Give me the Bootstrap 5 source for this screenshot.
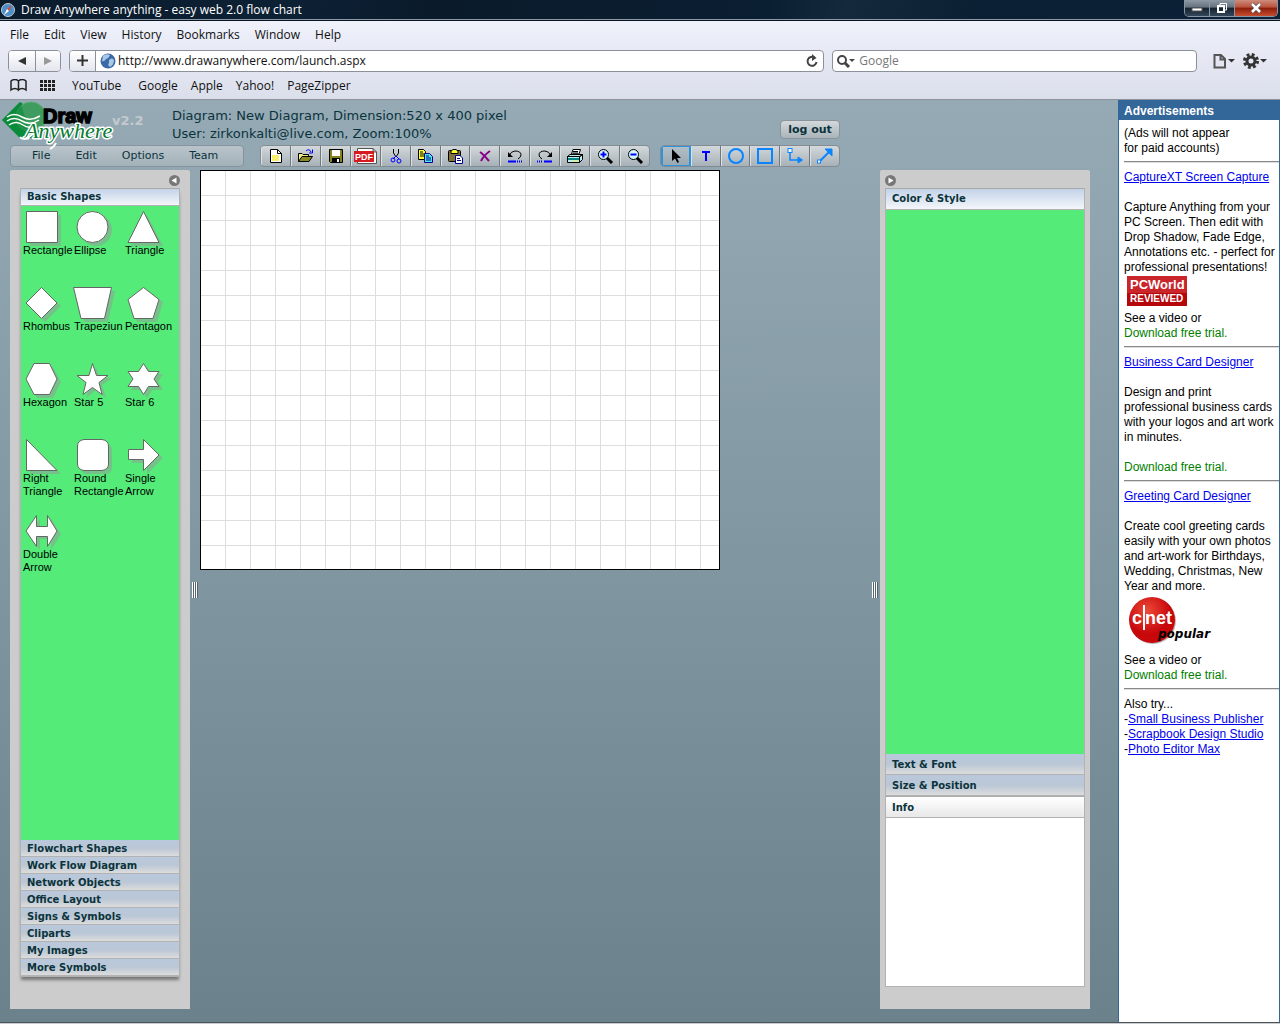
<!DOCTYPE html>
<html lang="en">
<head>
<meta charset="utf-8">
<meta name="viewport" content="width=device-width, initial-scale=1">
<title>Draw Anywhere anything - easy web 2.0 flow chart</title>
<link href="https://cdn.jsdelivr.net/npm/bootstrap@5.3.0/dist/css/bootstrap.min.css" rel="stylesheet">
<style>
body{font-family:"Open Sans","Noto Sans",sans-serif;font-size:12px;line-height:16px;color:#111}
button{font:inherit;color:inherit;border:0;background:none;padding:0}
svg{display:block;flex:none}
.titlebar{height:20px;background:linear-gradient(100deg,#0a1b2c 0,#0d2135 22%,#0a1a2b 34%,#0b1f32 60%,#14293b 66%,#0b2033 76%,#0c2138 100%);border-bottom:1px solid #8b98a6;color:#fff}
.titlebar h1{font-size:12px;line-height:20px;margin:0;font-weight:400}
.winbtns{height:17px;border:1px solid #8796a5;border-top:0;border-radius:0 0 5px 5px;overflow:hidden;margin-right:2px}
.winbtns button{width:25px;display:flex;justify-content:center;align-items:center;background:linear-gradient(#8e99a5,#66727f 45%,#15222f 50%,#34475a);border-right:1px solid #8796a5}
.winbtns .winclose{width:42px;border:0;background:linear-gradient(#cf8c7c,#b9513c 45%,#8c1d08 50%,#c64d30)}
.chrome{background:linear-gradient(#eff1fb,#dbdfeb);border-top:1px solid #0a1420;border-bottom:1px solid #8f939b}
.menurow{height:28px;gap:15px;padding-left:10px}
.addrrow{height:23px;gap:8px;padding-left:8px}
.markrow{height:27px;gap:13px;padding-left:10px}
.markrow a,.menurow button{color:#111;text-decoration:none}
.field{height:22px;border:1px solid #8c909b;border-radius:4px;background:#fff;overflow:hidden}
.urlfield{flex:27 1 0}
.searchfield{flex:13 1 0}
.field input{border:0;outline:0;background:none;flex:1;min-width:0;padding:0 4px;font:inherit;height:20px;color:#111}
.field .urlinput{padding-left:2px}
.field input::placeholder{color:#777}
.chromebtn{width:26px;height:20px;display:flex;align-items:center;justify-content:center;background:linear-gradient(#fff,#e4e6ee)}
.chromebtn+.chromebtn{border-left:1px solid #8c909b;width:25px}
.chromebtn.plus{border-right:1px solid #8c909b}
.workspace{background:linear-gradient(#95aab5,#6b828d);font-family:"DejaVu Sans",sans-serif;color:#0b333c}
.apphead{height:70px}
.brandrow{width:840px;height:45px}
.brandlogo{width:112px}
.version{width:60px;font-size:13px;line-height:18px;font-weight:700;color:#c4c9cd;padding-top:12px}
.docinfo{font-size:13px;line-height:18px;padding-top:7px}
.flexbtn{background:linear-gradient(#d3d8db,#a9b4ba);border:1px solid #8a959b;border-radius:4px}
.logout{width:60px;height:19px;margin-top:20px;font-size:11px;line-height:16px;font-weight:700}
.toolrow{gap:10px;padding-left:10px}
.appmenu{width:234px;height:22px;font-size:11px;padding-left:21px;gap:25px;margin-right:6px;background:linear-gradient(#b9c4ca,#a3b1b9);border:1px solid #8794a0;border-radius:4px}
.toolbar{height:22px;border-radius:4px;overflow:hidden;background:linear-gradient(#d3d8db,#a6b1b7);border:1px solid #828c92}
.toolbar button{flex:1;display:flex;align-items:center;justify-content:center;border-right:1px solid #6f787d;border-left:1px solid #dde1e3}
.toolbar button:last-child{border-right:0}
.toolbar .picked{box-shadow:inset 0 0 0 1px #2f93dc;border-color:#2f93dc;background:linear-gradient(#b4c0c8,#98a7b0)}
.toolmain{width:390px}
.tooldraw{width:180px}
.sidepanel{background:#ccc;border-radius:2px 2px 0 0}
.leftpanel{width:180px;padding:0 10px 32px}
.rightpanel{width:210px;padding:0 5px 22px}
.collapserow{height:18px;padding-top:5px}
.accord{border:1px solid #b0b3b6;border-top-color:#aaa}
.leftpanel .accord{box-shadow:0 4px 3px -1px #777}
.acchead{display:block;width:100%;text-align:left;font-weight:700;font-size:10px;padding-left:6px;background:linear-gradient(#b9c8dc 0,#bac7d6 50%,#dcdcdc);border-bottom:1px solid #b3b3b3;color:#0b333c}
.leftpanel .acchead{height:17px;line-height:15px}
.rightpanel .acchead{height:21px;line-height:19px}
.accord .acchead.opened{background:linear-gradient(#c3d3e8,#f4f6fa);padding-bottom:2px}
.accord .acchead.infohead{background:linear-gradient(#fff,#e8e8e8);border-top:1px solid #aaa;height:22px}
.greenbody{background:#54eb79}
.infobody{height:168px;background:#fff}
.shapes{padding:5px 0 0 2px;font-family:"Liberation Sans",Arial,sans-serif;color:#000}
.shapetile{width:51px;height:76px;font-size:11px;line-height:13px;text-align:left;color:#000;display:flex;flex-direction:column;align-items:flex-start}
.shapetile svg{width:51px;height:33px;overflow:visible}
.shapetile path{stroke:#666;fill:#fff;stroke-width:1}
.shapetile path.shade{stroke:none;fill:#75c189}
.grip{width:10px;display:flex;align-items:center;justify-content:center}
.grip i{width:6px;height:16px;background:repeating-linear-gradient(90deg,#fff 0 1px,#55656d 1px 2px)}
.sheet{width:520px;height:400px;border:1px solid #000;background:linear-gradient(90deg,#ddd 1px,transparent 1px),linear-gradient(#ddd 1px,transparent 1px),#fff;background-size:25px 25px;background-origin:border-box}
.panels{padding:0 28px 13px 10px}
.ads{width:162px;border-left:1px solid #336699;border-right:1px solid #336699;background:#fff;font:12px/15px "Liberation Sans",Arial,sans-serif;color:#000;overflow:hidden}
.ads h2{background:#336699;color:#fff;font-size:12px;line-height:20px;height:20px;margin:0;padding-left:5px;padding-top:1px;font-weight:700}
.adbody{padding:6px 0 0 5px;white-space:nowrap}
.adbody p{margin:0 0 15px}
.adbody p.tight{margin:0}
.adbody a{color:#00e;text-decoration:underline}
.adbody a.trial{color:#008000;text-decoration:none}
.adbody hr{height:2px;margin:5px 0 7px;border:0;border-top:1px solid #888;border-bottom:1px solid #ddd;opacity:1}
.statusline{height:2px;background:#4b5358;border-bottom:1px solid #c8ccd0}
</style>
</head>
<body class="vh-100 d-flex flex-column overflow-hidden">
<header>
 <div class="titlebar d-flex">
  <svg class="me-1" width="17" height="19"><circle cx="8" cy="10" r="6.500" fill="#4d8fc9" stroke="#c5ccd4"/><path d="M12 5L9 11L7 9z" fill="#e4472c"/><path d="M4 15L7 9L9 11z" fill="#fff"/></svg>
  <h1 class="flex-grow-1">Draw Anywhere anything - easy web 2.0 flow chart</h1>
  <div class="winbtns d-flex">
   <button aria-label="Minimize"><svg width="12" height="12"><rect x="1" y="6" width="10" height="3" fill="#fff" stroke="#555"/></svg></button>
   <button aria-label="Restore"><svg width="12" height="12" fill="none"><path d="M4 3V1.500H10.500V8H9" stroke="#fff"/><rect x="2" y="4" width="6" height="6" stroke="#fff" stroke-width="2"/></svg></button>
   <button class="winclose" aria-label="Close"><svg width="12" height="12"><path d="M2 2L10 10M10 2L2 10" stroke="#555" stroke-width="4"/><path d="M2 2L10 10M10 2L2 10" stroke="#fff" stroke-width="2.500"/></svg></button>
  </div>
 </div>
 <div class="chrome">
  <nav class="menurow d-flex align-items-center"><button>File</button><button>Edit</button><button>View</button><button>History</button><button>Bookmarks</button><button>Window</button><button>Help</button></nav>
  <div class="addrrow d-flex align-items-center">
   <div class="field d-flex">
    <button class="chromebtn" aria-label="Back"><svg width="10" height="10"><path d="M9 1V9L1 5z" fill="#333"/></svg></button>
    <button class="chromebtn" aria-label="Forward"><svg width="10" height="10"><path d="M1 1V9L9 5z" fill="#999"/></svg></button>
   </div>
   <div class="field urlfield d-flex align-items-center">
    <button class="chromebtn plus" aria-label="Add bookmark"><svg width="11" height="11"><path d="M5.500 0V11M0 5.500H11" stroke="#333" stroke-width="2"/></svg></button>
    <svg class="ms-1" width="16" height="16"><circle cx="8" cy="8" r="7.500" fill="#3c6aa8"/><path d="M3 3Q6 0 10 2Q9 5 6 6Q4 9 2 8zM9 7Q12 4 14 7Q14 12 10 14Q7 12 9 10z" fill="#a9c8e6"/></svg>
    <input class="urlinput" aria-label="Address" value="http://www.drawanywhere.com/launch.aspx">
    <button class="me-1" aria-label="Reload"><svg width="14" height="14" fill="none"><path d="M9.500 3.500A4.500 4.500 0 1 0 11.500 8" stroke="#444" stroke-width="2"/><path d="M7 0L11.500 4L7 7z" fill="#444"/></svg></button>
   </div>
   <div class="field searchfield d-flex align-items-center">
    <svg class="ms-1" width="18" height="14" fill="none"><circle cx="5" cy="6" r="4" stroke="#444" stroke-width="2"/><path d="M8 9L12 13" stroke="#444" stroke-width="3"/><path d="M12 5H18L15 8z" fill="#444"/></svg>
    <input aria-label="Search Google" placeholder="Google">
   </div>
   <button class="ms-2" aria-label="Page menu"><svg width="22" height="16" fill="none"><path d="M1.500 2H8L12 6V14.500H1.500zM7.500 2V6.500H12" stroke="#555" stroke-width="2"/><path d="M15 6H22L18.500 9.500z" fill="#333"/></svg></button>
   <button class="me-2 pe-1" aria-label="Settings menu"><svg width="25" height="16" fill="none"><circle cx="8" cy="8" r="6.500" stroke="#333" stroke-width="3" stroke-dasharray="2.800 2.300"/><circle cx="8" cy="8" r="4" stroke="#333" stroke-width="3"/><path d="M17 6H24L20.500 9.500z" fill="#333"/></svg></button>
  </div>
  <nav class="markrow d-flex align-items-center">
   <button aria-label="Show all bookmarks"><svg width="17" height="13" fill="none" stroke="#222" stroke-width="1.500"><path d="M8.500 11Q5 8 1 11V2Q5 -1 8.500 2Q12 -1 16 2V11Q12 8 8.500 11V2"/></svg></button>
   <button class="me-1" aria-label="Top sites"><svg width="15" height="11"><path d="M0 1.500H15M0 5.500H15M0 9.500H15" stroke="#222" stroke-width="3" stroke-dasharray="3 1"/></svg></button>
   <a href="#" class="me-1">YouTube</a><a href="#">Google</a><a href="#">Apple</a><a href="#">Yahoo!</a><a href="#">PageZipper</a>
  </nav>
 </div>
</header>

<div class="d-flex flex-grow-1">
 <main class="workspace d-flex flex-column flex-grow-1">
  <div class="apphead">
   <div class="brandrow d-flex align-items-start">
    <svg class="brandlogo overflow-visible position-relative z-1" height="47" viewBox="0 0 112 47" role="img" aria-label="Draw Anywhere">
     <path d="M2 20L20 2L46 18L38 38H20z" fill="#0c8c3c"/><circle cx="31" cy="17" r="15" fill="#3e9c60"/><circle cx="31" cy="17" r="15" fill="none" stroke="#5bab76"/><path d="M2 20L20 2L30 32L20 38z" fill="#0a8a39" opacity=".6"/>
     <path d="M7 17Q14 12 22 17T40 16M7 21Q14 16 22 21T39 20M9 25Q16 20 23 25T36 24" fill="none" stroke="#fff" stroke-width="1.500"/>
     <text x="43" y="23" font-family="Liberation Sans" font-weight="700" font-size="20" stroke="#000" stroke-width="1.500">Draw</text>
     <text x="25" y="38" font-family="Liberation Serif" font-style="italic" font-size="22" fill="#087b32" stroke="#fff" stroke-width="3" stroke-linejoin="round" paint-order="stroke">Anywhere</text>
     <path d="M20 37Q24 42 34 33M56 43Q54 47 50 49" fill="none" stroke="#fff" stroke-width="2"/>
    </svg>
    <div class="version">v2.2</div>
    <div class="docinfo flex-grow-1">Diagram: New Diagram, Dimension:520 x 400 pixel<br>User: zirkonkalti@live.com, Zoom:100%</div>
    <button class="flexbtn logout">log out</button>
   </div>
   <div class="toolrow d-flex">
    <nav class="appmenu d-flex align-items-center"><button>File</button><button>Edit</button><button>Options</button><button>Team</button></nav>
    <div class="toolbar toolmain d-flex">
     <button aria-label="New"><svg width="16" height="16"><path d="M2.500 1.500H9.500L13.500 5.500V14.500H2.500z" fill="#fff" stroke="#000"/><path d="M9.500 1.500V5.500H13.500" fill="none" stroke="#000"/><rect x="4" y="7" width="7" height="6" fill="#f8f06a"/></svg></button>
     <button aria-label="Open"><svg width="17" height="16"><path d="M1.500 13.500V5.500H5L6 6.500H11.500V9" fill="#f7ee80" stroke="#000"/><path d="M1.500 13.500L5 8.500H15.500L12 13.500z" fill="#8a8a22" stroke="#000"/><path d="M9 3Q12 0 14 4M15.500 1.500V5H12" fill="none" stroke="#00f"/></svg></button>
     <button aria-label="Save"><svg width="16" height="16"><path d="M1.500 1.500H14.500V14.500H2.500L1.500 13.500z" fill="#84841a" stroke="#000"/><rect x="4" y="2" width="8" height="6" fill="#fff"/><path d="M4 10H12V14H4z" fill="#000"/><rect x="9" y="11" width="2" height="3" fill="#fff"/></svg></button>
     <button aria-label="Export PDF"><svg width="26" height="18"><path d="M4.500 1.500H20L23.500 5V16.500H4.500zM20 1.500V5H23.500" fill="#fff" stroke="#555"/><rect x="1" y="4" width="20" height="11" fill="#d71920"/><text x="2" y="13" font-family="Liberation Sans" font-size="9" font-weight="700" fill="#fff">PDF</text></svg></button>
     <button aria-label="Cut"><svg width="16" height="16" fill="none"><path d="M5.500 1V5L8 9M10.500 1V5L8 9" stroke="#000"/><path d="M8 8L5 11M8 8L11 11" stroke="#00f"/><circle cx="5" cy="12" r="2" stroke="#00f"/><circle cx="11" cy="13" r="2" stroke="#00f"/></svg></button>
     <button aria-label="Copy"><svg width="17" height="16"><path d="M1.500 1.500H6.500L8.500 3.500V11.500H1.500z" fill="#ff3" stroke="#000"/><path d="M3 4H6M3 6H7M3 8H7" stroke="#000"/><path d="M7.500 5.500H12.500L15.500 8.500V14.500H7.500z" fill="#4ee8ee" stroke="#008"/><path d="M9 8H12M9 10H14M9 12H14" stroke="#008"/></svg></button>
     <button aria-label="Paste"><svg width="17" height="16"><rect x="1.500" y="2.500" width="12" height="11" rx="1" fill="#84743a" stroke="#000"/><path d="M4 5.500V3L6 1.500H9L11 3V5.500z" fill="#ff3" stroke="#000"/><path d="M8.500 7.500H13L15.500 10V15.500H8.500z" fill="#fff" stroke="#008"/><path d="M10 10.500H13M10 12.500H14" stroke="#008"/></svg></button>
     <button aria-label="Delete"><svg width="16" height="16"><path d="M3 4Q6 6 12 13M13 3Q7 7 4 13" fill="none" stroke="#808" stroke-width="2"/></svg></button>
     <button aria-label="Undo"><svg width="18" height="16" fill="none"><path d="M3 8Q5 3 9 3Q15 3 15 7Q15 9 12 11" stroke="#000"/><path d="M2 4V9H7z" fill="#000"/><path d="M2 13.500H10" stroke="#00f" stroke-width="2"/><path d="M11 13.500H17" stroke="#00f" stroke-width="2" stroke-dasharray="1 1"/></svg></button>
     <button aria-label="Redo"><svg width="18" height="16" fill="none"><path d="M15 8Q13 3 9 3Q3 3 3 7Q3 9 6 11" stroke="#000"/><path d="M16 4V9H11z" fill="#000"/><path d="M8 13.500H16" stroke="#00f" stroke-width="2"/><path d="M1 13.500H7" stroke="#00f" stroke-width="2" stroke-dasharray="1 1"/></svg></button>
     <button aria-label="Print"><svg width="18" height="16"><path d="M5.500 6L7 1.500H14.500L13 6z" fill="#fff" stroke="#000"/><path d="M7 3.500H12M7 5H12" stroke="#000"/><path d="M1.500 8.500L4 6.500H16.500L14 8.500zM1.500 8.500H13.500V14.500H1.500zM13.500 8.500L16.500 6.500V11.500L13.500 14.500" fill="#bdf1f0" stroke="#000"/><path d="M2 11H13" stroke="#088" stroke-width="2"/><path d="M7 13H12" stroke="#ee4"/></svg></button>
     <button aria-label="Zoom in"><svg width="17" height="16"><path d="M10 10L15 15" stroke="#000" stroke-width="3"/><circle cx="6.500" cy="6.500" r="5" fill="#d5f8fb" stroke="#000"/><path d="M3.500 6.500H9.500M6.500 3.500V9.500" stroke="#00f" stroke-width="2"/></svg></button>
     <button aria-label="Zoom out"><svg width="17" height="16"><path d="M10 10L15 15" stroke="#000" stroke-width="3"/><circle cx="6.500" cy="6.500" r="5" fill="#d5f8fb" stroke="#000"/><path d="M3.500 6.500H9.500" stroke="#00f" stroke-width="2"/></svg></button>
    </div>
    <div class="toolbar tooldraw d-flex">
     <button class="picked" aria-label="Select"><svg width="12" height="16"><path d="M2 1V13L5 10.500L7.500 15L9 14L7 10H11z" fill="#000"/></svg></button>
     <button aria-label="Text"><svg width="10" height="12"><path d="M1 2H9M5 2V11" stroke="#00f" stroke-width="2" fill="none"/></svg></button>
     <button aria-label="Ellipse tool"><svg width="18" height="18"><circle cx="9" cy="9" r="7" fill="none" stroke="#0a84ff" stroke-width="2"/></svg></button>
     <button aria-label="Rectangle tool"><svg width="18" height="18"><rect x="2" y="2" width="14" height="14" fill="none" stroke="#0a84ff" stroke-width="2"/></svg></button>
     <button aria-label="Elbow connector"><svg width="18" height="18" fill="none" stroke="#0a84ff"><path d="M4 5V13H13" stroke-width="1.500"/><path d="M12 10L16.500 13L12 16z" fill="#0a84ff"/><rect x="2" y="1.500" width="4" height="4" fill="#fff"/></svg></button>
     <button aria-label="Line connector"><svg width="18" height="18" fill="none" stroke="#0a84ff"><path d="M4 14L15 3" stroke-width="2"/><path d="M9 2H16V9z" fill="#0a84ff"/><rect x="1.500" y="13" width="3" height="3" fill="#fff"/></svg></button>
    </div>
   </div>
  </div>

  <div class="panels d-flex flex-grow-1">
   <section class="sidepanel leftpanel d-flex flex-column">
    <div class="collapserow d-flex justify-content-end"><button class="d-flex" aria-label="Collapse shapes"><svg width="11" height="11"><circle cx="5.500" cy="5.500" r="5.500" fill="#777"/><path d="M7.500 2.500V8.500L2.500 5.500z" fill="#fff"/></svg></button></div>
    <div class="accord d-flex flex-column flex-grow-1">
     <button class="acchead opened">Basic Shapes</button>
     <div class="greenbody flex-grow-1">
      <div class="shapes d-flex flex-wrap">
       <button class="shapetile"><svg><path class="shade" d="M7 4H38V35H7z"/><path d="M3.500 .5H34.500V31.500H3.500z"/></svg><span>Rectangle</span></button>
       <button class="shapetile"><svg><path class="shade" d="M6 19a16 16 0 1 0 32 0a16 16 0 1 0-32 0"/><path d="M3 16a15.500 15.500 0 1 0 31 0a15.500 15.500 0 1 0-31 0"/></svg><span>Ellipse</span></button>
       <button class="shapetile"><svg><path class="shade" d="M22 4L38 35H6z"/><path d="M18.500 .5L34 31.500H3z"/></svg><span>Triangle</span></button>
       <button class="shapetile"><svg><path class="shade" d="M22 4L38 19L22 35L6 19z"/><path d="M18.500 .5L34 16L18.500 31.500L3 16z"/></svg><span>Rhombus</span></button>
       <button class="shapetile"><svg><path class="shade" d="M4 4H41L34 35H10z"/><path d="M-.5 .5H37.500L30.500 31.500H7z"/></svg><span>Trapeziun</span></button>
       <button class="shapetile"><svg><path class="shade" d="M22 4L38 15L32 35H12L6 15z"/><path d="M18.500 .5L34 12.500L28 31.500H9L3 12.500z"/></svg><span>Pentagon</span></button>
       <button class="shapetile"><svg><path class="shade" d="M14 4H30L38 19L30 35H14L6 19z"/><path d="M11 .5H26.500L34 16L26.500 31.500H11L3 16z"/></svg><span>Hexagon</span></button>
       <button class="shapetile"><svg><path class="shade" d="M22 4L26 15H38L28 22L32 35L22 27L12 35L16 22L6 15H18z"/><path d="M18.500 .5L22.500 12.500H34L25 19.500L28 31.500L18.500 24.500L9 31.500L12 19.500L3 12.500H15z"/></svg><span>Star 5</span></button>
       <button class="shapetile"><svg><path class="shade" d="M22 4L27 11H38L33 19L38 27H27L22 35L17 27H6L11 19L6 11H17z"/><path d="M18.500 .5L23.500 8.500H34L29 16L34 23.500H23.500L18.500 31.500L13.500 23.500H3L8 16L3 8.500H13.500z"/></svg><span>Star 6</span></button>
       <button class="shapetile"><svg><path class="shade" d="M7 4V35H38z"/><path d="M3.500 .5V31.500H34z"/></svg><span>Right Triangle</span></button>
       <button class="shapetile"><svg><path class="shade" d="M13 4H31Q38 5 38 12V28Q38 35 31 35H13Q7 35 7 28V12z"/><path d="M10 .5H28Q34.500 1.500 34.500 7V25Q34.500 30.500 28 31.500H10Q3.500 30.500 3.500 25V7Q3.500 1.500 10 .5z"/></svg><span>Round Rectangle</span></button>
       <button class="shapetile"><svg><path class="shade" d="M7 14H22V4L38 19L22 35V24H7z"/><path d="M3.500 10.500H18.500V.5L34 16L18.500 31.500V20.500H3.500z"/></svg><span>Single Arrow</span></button>
       <button class="shapetile"><svg><path class="shade" d="M6 19L17 4V14H28V4L38 19L28 35V24H17V35z"/><path d="M3 16L13.500 .5V11.500H24.500V.5L34 16L24.500 31.500V21.500H13.500V31.500z"/></svg><span>Double Arrow</span></button>
      </div>
     </div>
     <button class="acchead">Flowchart Shapes</button><button class="acchead">Work Flow Diagram</button><button class="acchead">Network Objects</button><button class="acchead">Office Layout</button><button class="acchead">Signs &amp; Symbols</button><button class="acchead">Cliparts</button><button class="acchead">My Images</button><button class="acchead">More Symbols</button>
    </div>
   </section>
   <div class="grip"><i></i></div>
   <div class="flex-grow-1"><div class="sheet"></div></div>
   <div class="grip"><i></i></div>
   <section class="sidepanel rightpanel d-flex flex-column">
    <div class="collapserow d-flex"><button class="d-flex" aria-label="Collapse properties"><svg width="11" height="11"><circle cx="5.500" cy="5.500" r="5.500" fill="#777"/><path d="M3.500 2.500V8.500L8.500 5.500z" fill="#fff"/></svg></button></div>
    <div class="accord d-flex flex-column flex-grow-1">
     <button class="acchead opened">Color &amp; Style</button>
     <div class="greenbody flex-grow-1"></div>
     <button class="acchead">Text &amp; Font</button>
     <button class="acchead">Size &amp; Position</button>
     <button class="acchead infohead">Info</button>
     <div class="infobody"></div>
    </div>
   </section>
  </div>
 </main>

 <aside class="ads flex-shrink-0">
  <h2>Advertisements</h2>
  <div class="adbody">
   <p class="tight">(Ads will not appear<br>for paid accounts)</p>
   <hr>
   <p><a href="#">CaptureXT Screen Capture</a></p>
   <p class="tight">Capture Anything from your<br>PC Screen. Then edit with<br>Drop Shadow, Fade Edge,<br>Annotations etc. - perfect for<br>professional presentations!</p>
   <svg width="70" height="36" role="img" aria-label="PCWorld Reviewed"><rect x="3" y="1" width="60" height="30" fill="#b5060b"/><rect x="3" y="1" width="60" height="17" fill="#c9252b"/><text x="6" y="14" font-size="13" font-weight="700" fill="#fff">PCWorld</text><text x="6" y="27" font-size="10" font-weight="700" fill="#fff">REVIEWED</text></svg>
   <p class="tight">See a video or<br><a class="trial" href="#">Download free trial.</a></p>
   <hr>
   <p><a href="#">Business Card Designer</a></p>
   <p>Design and print<br>professional business cards<br>with your logos and art work<br>in minutes.</p>
   <p class="tight"><a class="trial" href="#">Download free trial.</a></p>
   <hr>
   <p><a href="#">Greeting Card Designer</a></p>
   <p class="tight">Create cool greeting cards<br>easily with your own photos<br>and art-work for Birthdays,<br>Wedding, Christmas, New<br>Year and more.</p>
   <svg width="100" height="59" role="img" aria-label="CNET popular"><defs><radialGradient id="cnet" cx=".4" cy=".3"><stop offset="0" stop-color="#ec4a38"/><stop offset="1" stop-color="#c8070b"/></radialGradient></defs><circle cx="29" cy="27" r="23" fill="#bbb"/><circle cx="28" cy="26" r="23" fill="url(#cnet)"/><g fill="#fff" font-family="Liberation Sans" font-weight="700" font-size="18"><text x="8" y="30">c</text><text x="21" y="30">net</text></g><path d="M20 11V36" stroke="#fff" stroke-width="2"/><text x="34" y="44" font-family="DejaVu Sans" font-size="12" font-weight="700" font-style="italic">popular</text></svg>
   <p class="tight">See a video or<br><a class="trial" href="#">Download free trial.</a></p>
   <hr>
   <p class="tight">Also try...<br>-<a href="#">Small Business Publisher</a><br>-<a href="#">Scrapbook Design Studio</a><br>-<a href="#">Photo Editor Max</a></p>
  </div>
 </aside>
</div>
<div class="statusline"></div>
<script src="https://cdn.jsdelivr.net/npm/bootstrap@5.3.0/dist/js/bootstrap.bundle.min.js"></script>
</body>
</html>
